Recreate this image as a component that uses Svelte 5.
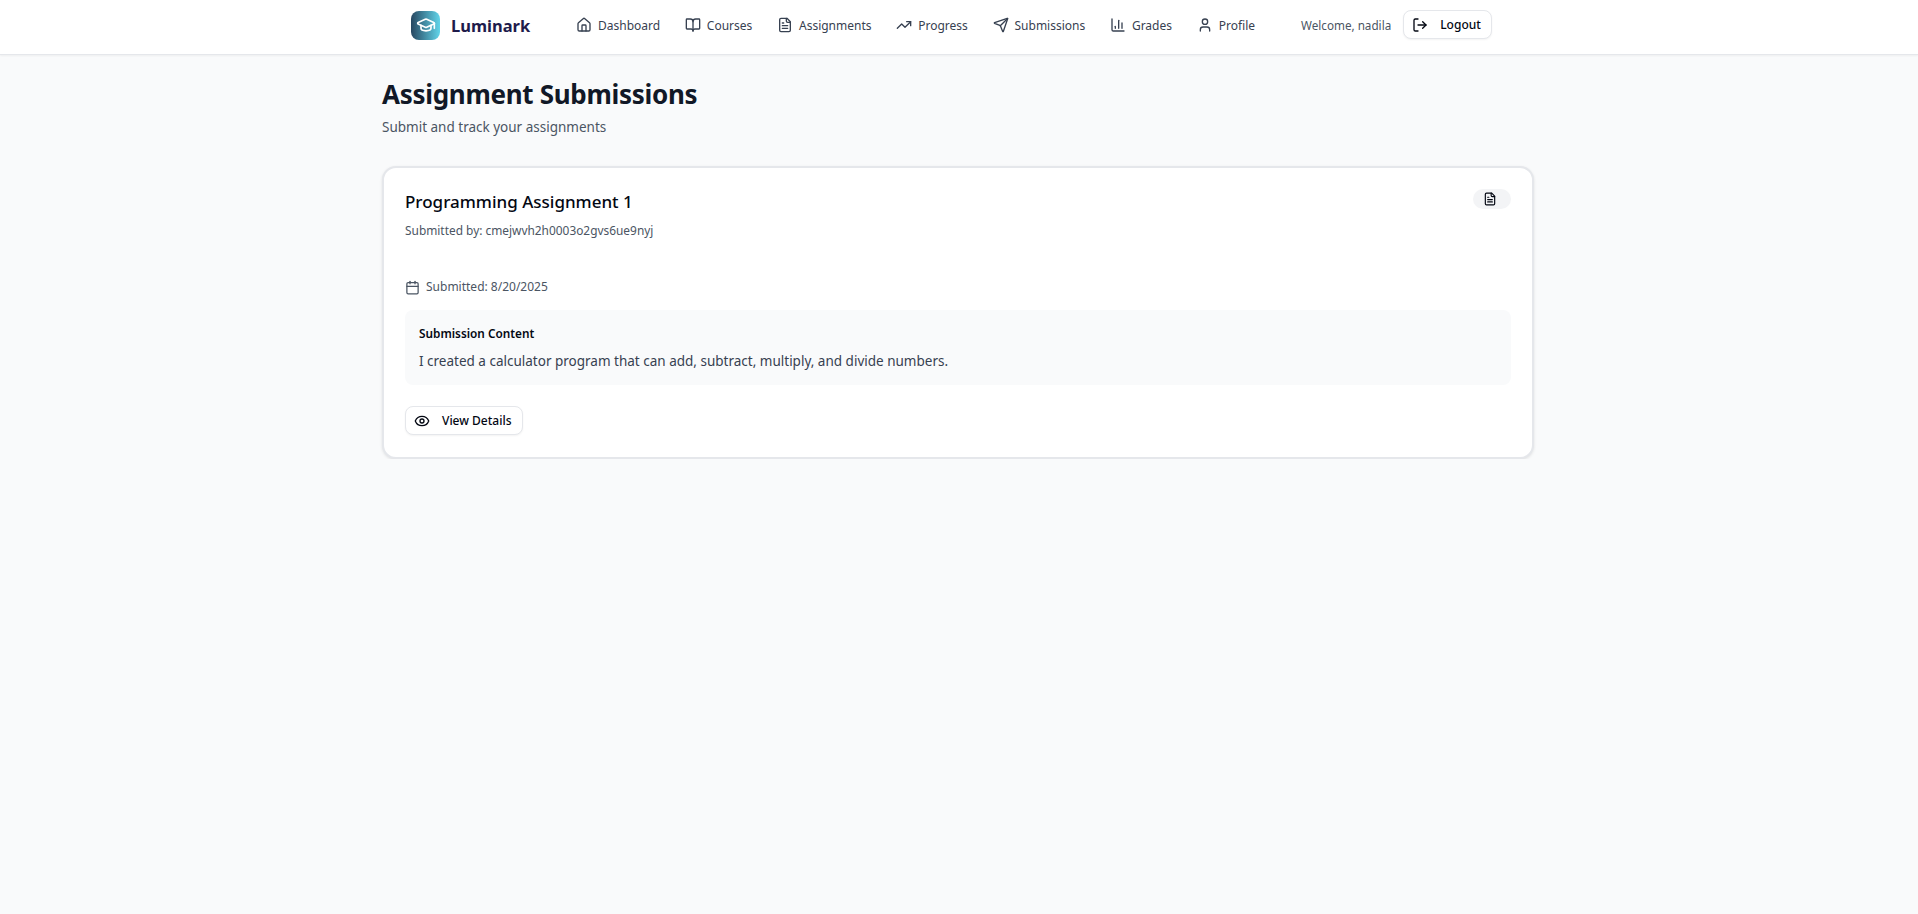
<script>
  const navItems = [
    { label: "Dashboard", icon: "home" },
    { label: "Courses", icon: "book" },
    { label: "Assignments", icon: "file" },
    { label: "Progress", icon: "trend" },
    { label: "Submissions", icon: "send" },
    { label: "Grades", icon: "chart" },
    { label: "Profile", icon: "user" },
  ];
</script>

{#snippet icon(name)}
  <svg class="icon" viewBox="0 0 24 24" fill="none" stroke="currentColor" stroke-width="2" stroke-linecap="round" stroke-linejoin="round">
    {#if name === "home"}
      <path d="M15 21v-8a1 1 0 0 0-1-1h-4a1 1 0 0 0-1 1v8" />
      <path d="M3 10a2 2 0 0 1 .709-1.528l7-5.999a2 2 0 0 1 2.582 0l7 5.999A2 2 0 0 1 21 10v9a2 2 0 0 1-2 2H5a2 2 0 0 1-2-2z" />
    {:else if name === "book"}
      <path d="M12 7v14" />
      <path d="M3 18a1 1 0 0 1-1-1V4a1 1 0 0 1 1-1h5a4 4 0 0 1 4 4 4 4 0 0 1 4-4h5a1 1 0 0 1 1 1v13a1 1 0 0 1-1 1h-6a3 3 0 0 0-3 3 3 3 0 0 0-3-3z" />
    {:else if name === "file"}
      <path d="M15 2H6a2 2 0 0 0-2 2v16a2 2 0 0 0 2 2h12a2 2 0 0 0 2-2V7Z" />
      <path d="M14 2v4a2 2 0 0 0 2 2h4" />
      <path d="M10 9H8" />
      <path d="M16 13H8" />
      <path d="M16 17H8" />
    {:else if name === "trend"}
      <polyline points="22 7 13.5 15.5 8.5 10.5 2 17" />
      <polyline points="16 7 22 7 22 13" />
    {:else if name === "send"}
      <path d="M14.536 21.686a.5.5 0 0 0 .937-.024l6.5-19a.496.496 0 0 0-.635-.635l-19 6.5a.5.5 0 0 0-.024.937l7.93 3.18a2 2 0 0 1 1.112 1.11z" />
      <path d="m21.854 2.147-10.94 10.939" />
    {:else if name === "chart"}
      <path d="M3 3v16a2 2 0 0 0 2 2h16" />
      <path d="M18 17V9" />
      <path d="M13 17V5" />
      <path d="M8 17v-3" />
    {:else if name === "user"}
      <path d="M19 21v-2a4 4 0 0 0-4-4H9a4 4 0 0 0-4 4v2" />
      <circle cx="12" cy="7" r="4" />
    {:else if name === "logout"}
      <path d="M9 21H5a2 2 0 0 1-2-2V5a2 2 0 0 1 2-2h4" />
      <polyline points="16 17 21 12 16 7" />
      <line x1="21" y1="12" x2="9" y2="12" />
    {:else if name === "calendar"}
      <path d="M8 2v4" />
      <path d="M16 2v4" />
      <rect width="18" height="18" x="3" y="4" rx="2" />
      <path d="M3 10h18" />
    {:else if name === "eye"}
      <path d="M2.062 12.348a1 1 0 0 1 0-.696 10.75 10.75 0 0 1 19.876 0 1 1 0 0 1 0 .696 10.75 10.75 0 0 1-19.876 0" />
      <circle cx="12" cy="12" r="3" />
    {:else if name === "cap"}
      <path d="M21.42 10.922a1 1 0 0 0-.019-1.838L12.83 5.18a2 2 0 0 0-1.66 0L2.6 9.08a1 1 0 0 0 0 1.832l8.57 3.908a2 2 0 0 0 1.66 0z" />
      <path d="M22 10v6" />
      <path d="M6 12.5V16a6 3 0 0 0 12 0v-3.5" />
    {/if}
  </svg>
{/snippet}

<header class="topbar">
  <div class="topbar-inner">
    <a class="brand" href="#top">
      <span class="logo">{@render icon("cap")}</span>
      <span class="brand-name">Luminark</span>
    </a>
    <nav class="nav">
      {#each navItems as item}
        <a class="nav-link" href="#top">{@render icon(item.icon)}{item.label}</a>
      {/each}
    </nav>
    <div class="account">
      <span class="welcome">Welcome, nadila</span>
      <button class="btn logout">{@render icon("logout")}Logout</button>
    </div>
  </div>
</header>

<main class="page">
  <h1>Assignment Submissions</h1>
  <p class="subtitle">Submit and track your assignments</p>

  <article class="card">
    <div class="card-head">
      <div>
        <h2>Programming Assignment 1</h2>
        <p class="by">Submitted by: cmejwvh2h0003o2gvs6ue9nyj</p>
      </div>
      <span class="badge">{@render icon("file")}</span>
    </div>
    <div class="card-body">
      <div class="date">{@render icon("calendar")}Submitted: 8/20/2025</div>
      <div class="content-box">
        <h3>Submission Content</h3>
        <p>I created a calculator program that can add, subtract, multiply, and divide numbers.</p>
      </div>
      <button class="btn details">{@render icon("eye")}View Details</button>
    </div>
  </article>
</main>

<style>
  :global(body) {
    background: #f9fafb;
    font-family: "Noto Sans", "Open Sans", sans-serif;
    color: #030712;
  }
  .icon {
    width: 16px;
    height: 16px;
    flex: none;
  }
  .topbar {
    background: #fff;
    height: 54px;
    border-bottom: 1px solid #e5e7eb;
    box-shadow: 0 1px 2px rgba(0, 0, 0, 0.05);
  }
  .topbar-inner {
    display: flex;
    align-items: center;
    height: 50px;
    padding-left: 411px;
  }
  .brand {
    display: flex;
    align-items: center;
    gap: 11px;
    text-decoration: none;
    width: 153px;
  }
  .logo {
    width: 29px;
    height: 29px;
    border-radius: 8px;
    background: linear-gradient(90deg, #274761, #62d5ea);
    color: #fff;
    display: flex;
    align-items: center;
    justify-content: center;
  }
  .logo .icon {
    width: 20px;
    height: 20px;
  }
  .brand-name {
    font-size: 16.5px;
    font-weight: 700;
    color: #1e1b4b;
  }
  .nav {
    display: flex;
    gap: 0.7px;
  }
  .nav-link {
    display: flex;
    align-items: center;
    gap: 6px;
    padding: 8px 12px;
    font-size: 12px;
    color: #374151;
    text-decoration: none;
    white-space: nowrap;
  }
  .account {
    display: flex;
    align-items: center;
    gap: 12px;
    margin-left: 34px;
  }
  .welcome {
    font-size: 11.7px;
    color: #4b5563;
  }
  .btn {
    display: flex;
    align-items: center;
    gap: 12px;
    height: 29px;
    padding: 0 10px 0 8px;
    background: #fff;
    border: 1px solid #e5e7eb;
    border-radius: 8px;
    box-shadow: 0 1px 2px rgba(0, 0, 0, 0.05);
    font: inherit;
    font-size: 12px;
    font-weight: 500;
    color: #030712;
  }
  .logout {
    margin-top: -1px;
  }
  .page {
    width: 1152px;
    margin-left: 382px;
    padding-top: 21px;
  }
  h1 {
    margin: 0;
    font-size: 26px;
    line-height: 36px;
    font-weight: 700;
    letter-spacing: -0.3px;
    color: #111827;
  }
  .subtitle {
    margin: 5px 0 0;
    font-size: 13.5px;
    line-height: 20px;
    color: #4b5563;
  }
  .card {
    margin-top: 29px;
    background: #fff;
    border: 2px solid #e5e7eb;
    border-radius: 14px;
    box-shadow: 0 1px 3px rgba(0, 0, 0, 0.1);
    padding: 21px 21px 22px;
  }
  .card-head {
    display: flex;
    justify-content: space-between;
    align-items: flex-start;
  }
  h2 {
    margin: 1px 0 0;
    font-size: 17px;
    line-height: 24px;
    font-weight: 500;
  }
  .by {
    margin: 8px 0 0;
    font-size: 11.9px;
    line-height: 16px;
    color: #4b5563;
  }
  .badge {
    display: flex;
    justify-content: center;
    align-items: center;
    width: 38px;
    height: 20px;
    padding-right: 4px;
    box-sizing: border-box;
    border-radius: 10px;
    background: #f3f4f6;
  }
  .badge .icon {
    width: 14px;
    height: 14px;
  }
  .card-body {
    margin-top: 41px;
  }
  .date {
    display: flex;
    align-items: center;
    gap: 6px;
    font-size: 12px;
    line-height: 16px;
    color: #4b5563;
  }
  .date .icon {
    width: 15px;
    height: 15px;
  }
  .content-box {
    margin-top: 15px;
    padding: 15px 14px 14px;
    background: #f9fafb;
    border-radius: 8px;
  }
  h3 {
    margin: 0;
    font-size: 11.8px;
    line-height: 16px;
    font-weight: 600;
  }
  .content-box p {
    margin: 10px 0 0;
    font-size: 13.5px;
    line-height: 20px;
    color: #374151;
  }
  .details {
    margin-top: 21px;
  }
</style>
